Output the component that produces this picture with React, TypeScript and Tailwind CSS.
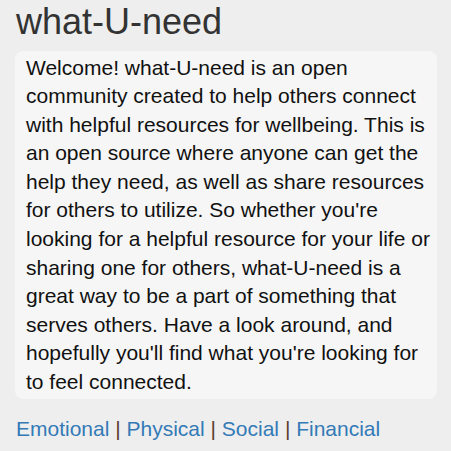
export default function App() {
  const links = ["Emotional", "Physical", "Social", "Financial"];
  return (
    <main className="min-h-[451px] bg-[#eeeeee] px-[15px] pt-[2px] font-['Liberation_Sans',Arial,sans-serif] text-[#333]">
      <h1 className="pl-[1px] text-[36px] leading-[39.6px]">what-U-need</h1>

      <div className="mt-[9px] w-[422px] rounded-[8px] bg-[#f6f6f6] pl-[11px] pr-[3px] pt-[3px] pb-[3px]">
        <p className="text-[21px] leading-[28.57px] text-[#111]">
          Welcome! what-U-need is an open community created to help others
          connect with helpful resources for wellbeing. This is an open source
          where anyone can get the help they need, as well as share resources
          for others to utilize. So whether you're looking for a helpful
          resource for your life or sharing one for others, what-U-need is a
          great way to be a part of something that serves others. Have a look
          around, and hopefully you'll find what you're looking for to feel
          connected.
        </p>
      </div>

      <nav className="mt-[16px] pl-[1px] text-[21px] leading-[28.57px]">
        {links.map((link, i) => (
          <span key={link}>
            {i > 0 && <span className="text-[#5a4030]"> | </span>}
            <a href="#" className="text-[#337ab7]">
              {link}
            </a>
          </span>
        ))}
      </nav>
    </main>
  );
}
